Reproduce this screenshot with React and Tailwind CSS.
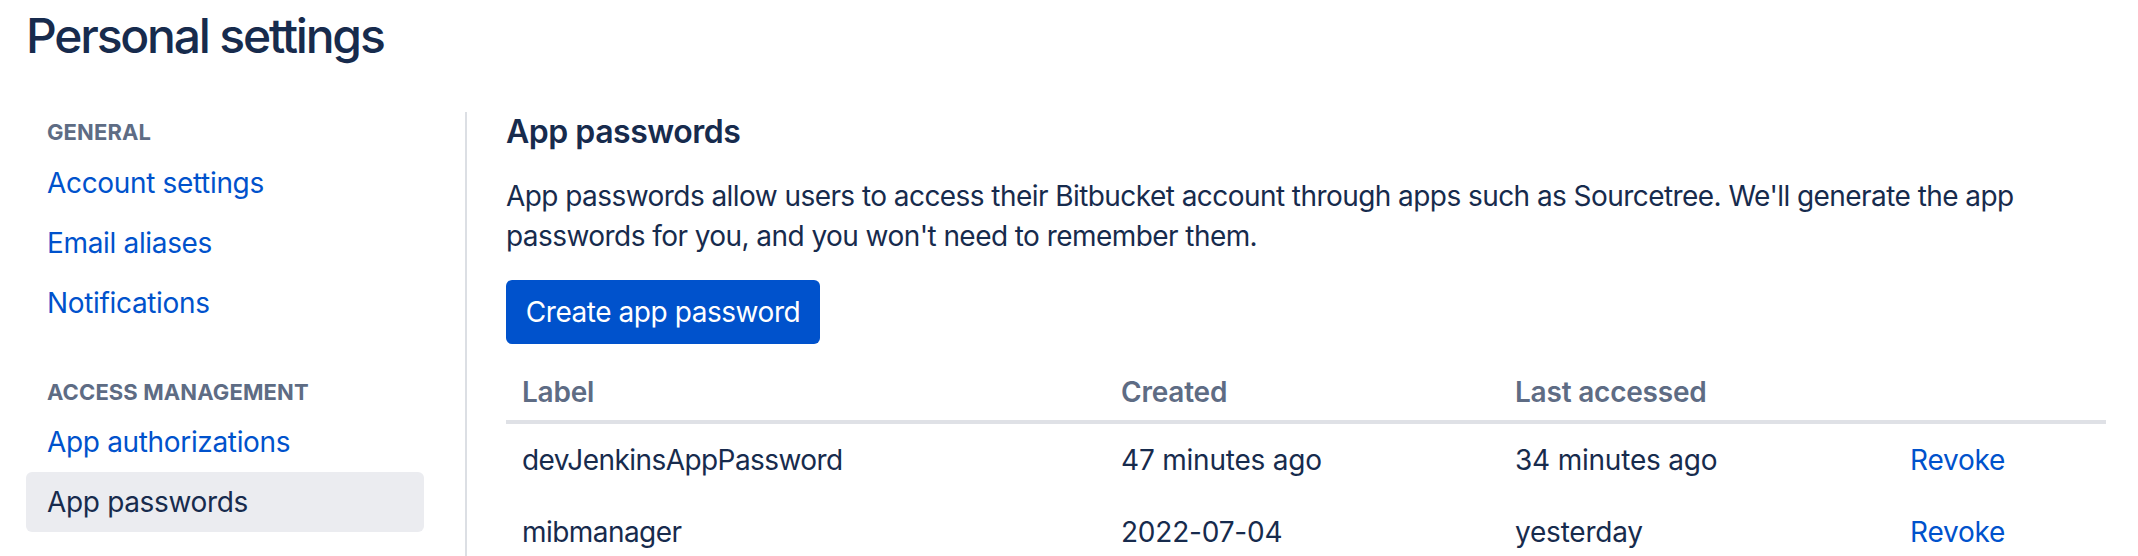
import React from "react";

const font = { fontFamily: "Inter, 'Liberation Sans', sans-serif" };

function NavHeader({ children, className = "" }) {
  return (
    <div className={"pl-[21px] text-[22px] leading-[32px] font-bold uppercase text-[#5e6c84] tracking-[0.005em] " + className}>
      {children}
    </div>
  );
}

function NavItem({ children, active }) {
  return (
    <div
      className={
        "h-[60px] flex items-center pl-[21px] rounded-[6px] text-[28px] leading-[40px] tracking-[-0.012em] " +
        (active ? "bg-[#ebecf0] text-[#172b4d]" : "text-[#0052cc]")
      }
    >
      {children}
    </div>
  );
}

const rows = [
  { label: "devJenkinsAppPassword", created: "47 minutes ago", last: "34 minutes ago" },
  { label: "mibmanager", created: "2022-07-04", last: "yesterday" },
];

export default function App() {
  return (
    <div
      className="w-[2138px] h-[556px] overflow-hidden bg-white pl-[26px] pt-[8px] text-[#172b4d] antialiased"
      style={font}
    >
      <h1 className="text-[48px] leading-[56px] font-medium tracking-[-0.046em] text-[#172b4d]">
        Personal settings
      </h1>
      <div className="mt-[48px] flex">
        <nav className="w-[398px] shrink-0 pt-[4px]">
          <NavHeader className="mb-[5px]">General</NavHeader>
          <NavItem>Account settings</NavItem>
          <NavItem>Email aliases</NavItem>
          <NavItem>Notifications</NavItem>
          <NavHeader className="mt-[43px] mb-[4px]">Access management</NavHeader>
          <NavItem>App authorizations</NavItem>
          <NavItem active>App passwords</NavItem>
        </nav>
        <main className="ml-[41px] border-l-2 border-[#dcdfe4] pl-[39px] h-[600px] tracking-[-0.013em]">
          <h2 className="text-[32px] leading-[40px] font-semibold tracking-[-0.015em] text-[#172b4d]">
            App passwords
          </h2>
          <p className="mt-[24px] text-[28px] leading-[40px] tracking-[-0.02em] text-[#172b4d]">
            App passwords allow users to access their Bitbucket account through apps such as Sourcetree. We'll generate the app
            <br />
            passwords for you, and you won't need to remember them.
          </p>
          <button className="mt-[24px] w-[314px] h-[64px] rounded-[6px] bg-[#0052cc] text-white text-[28px] leading-[40px] tracking-[-0.016em] flex items-center justify-center">
            Create app password
          </button>
          <div className="mt-[20px] w-[1600px]">
            <div className="grid grid-cols-[599px_394px_395px_212px] border-b-4 border-[#dfe1e6] text-[28px] leading-[40px] font-semibold text-[#5e6c84]">
              <div className="px-[16px] py-[8px]">Label</div>
              <div className="px-[16px] py-[8px]">Created</div>
              <div className="px-[16px] py-[8px]">Last accessed</div>
              <div className="px-[16px] py-[8px]"></div>
            </div>
            {rows.map((r) => (
              <div
                key={r.label}
                className="grid grid-cols-[599px_394px_395px_212px] text-[28px] leading-[40px] text-[#172b4d]"
              >
                <div className="px-[16px] py-[16px] tracking-[-0.02em]">{r.label}</div>
                <div className="px-[16px] py-[16px]">{r.created}</div>
                <div className="px-[16px] py-[16px]">{r.last}</div>
                <div className="px-[16px] py-[16px] text-[#0052cc]">Revoke</div>
              </div>
            ))}
          </div>
        </main>
      </div>
    </div>
  );
}
